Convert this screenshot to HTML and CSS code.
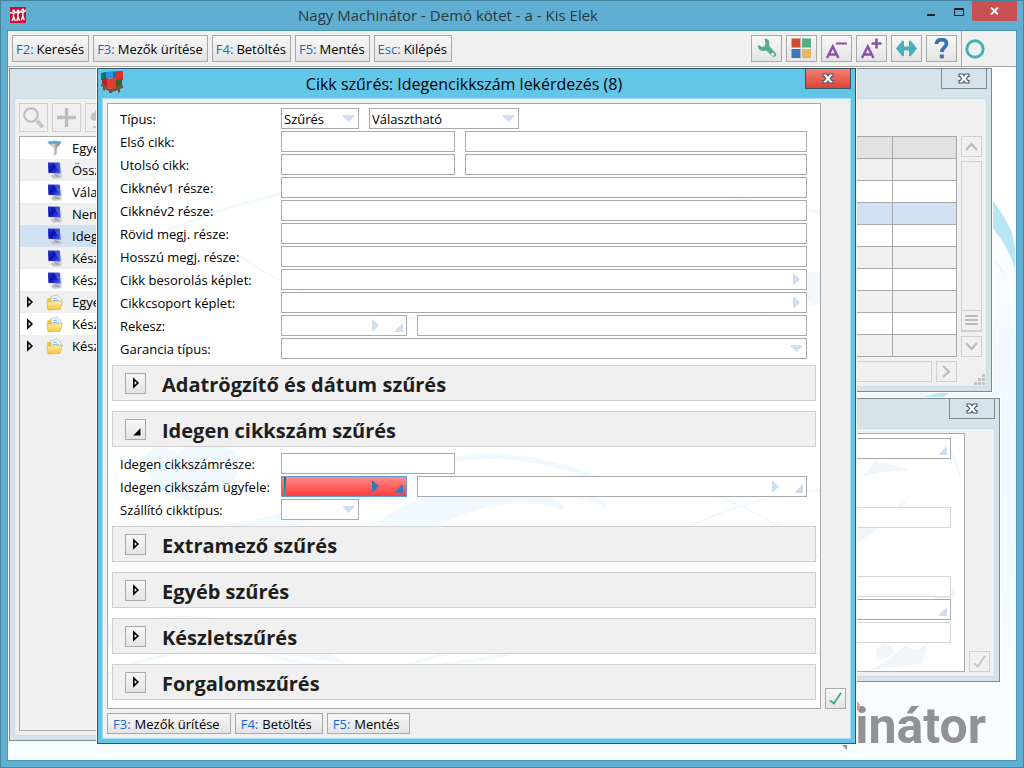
FILE: index.html
```html
<!DOCTYPE html>
<html lang="hu">
<head>
<meta charset="utf-8">
<title>Nagy Machinátor - Demó kötet - a - Kis Elek</title>
<link rel="stylesheet" href="styles.css">
</head>
<body>
<svg class="defs" width="0" height="0" aria-hidden="true">
  <defs>
    <linearGradient id="screen" x1="0" y1="0" x2="1" y2="1"><stop offset="0" stop-color="#2a3ad0"/><stop offset="0.45" stop-color="#0a10b0"/><stop offset="1" stop-color="#5070e8"/></linearGradient>
    <linearGradient id="folder" x1="0" y1="0" x2="0" y2="1"><stop offset="0" stop-color="#fff3a8"/><stop offset="1" stop-color="#f3c440"/></linearGradient>
    <linearGradient id="metal" x1="0" y1="0" x2="1" y2="0"><stop offset="0" stop-color="#6f7578"/><stop offset="0.4" stop-color="#d5d8d8"/><stop offset="1" stop-color="#5f6568"/></linearGradient>
    <symbol id="cross" viewBox="0 0 12 11"><path d="M1 1h3.800L6 3l1.200-2H11v2.500H9.800L8.300 5.500l1.500 2H11V10H7.200L6 8 4.800 10H1V7.500h1.200l1.500-2-1.500-2H1z" fill="#fff" stroke="#4a5060" stroke-width="1.100"/></symbol>
    <symbol id="monitor" viewBox="0 0 16 16"><path d="M4 13l5-2 6 2-1 2.400-7 .4z" fill="#c4c6ce"/><path d="M8 11l4 .5v2.500l-4-.5z" fill="#9a9ca8"/><path d="M2.500.8l11.300.2 1.400 11.500L2 10.800z" fill="#d7d9e2"/><path d="M1.800.5l11 .3 1 10.200-11.500-1z" fill="url(#screen)"/><path d="M8 .7l4.800.1 1 8C11 7 8.800 4.500 8 .7z" fill="#6c88f0" opacity=".5"/></symbol>
    <symbol id="docs" viewBox="0 0 17 16"><path d="M1 4l5-1.500 2 1.500 6 .5v10L2 15z" fill="#f2c44c"/><path d="M5 2l6-1.500L15 4v8H5.500z" fill="#f4f8ff" stroke="#a9bfe6" stroke-width=".8"/><path d="M7 4l4-.5M7 6l6-.3M7 8h6" stroke="#8fb0e4"/><path d="M.8 7.500l12-.2 3.700-.8-2.400 8.300L2 15.500z" fill="url(#folder)" stroke="#dcaa38" stroke-width=".6"/></symbol>
    <symbol id="closed" viewBox="0 0 8 12"><path d="M1.800 2.200v7.600L5.900 6z" fill="none" stroke="#000" stroke-width="1.600"/></symbol>
    <symbol id="tick" viewBox="0 0 15 15"><path d="M2 9.500L6 12.500 13 1.800" fill="none" stroke="currentColor" stroke-width="1.900"/></symbol>
  </defs>
</svg>
<div class="app">
  <header class="titlebar">
    <svg class="app-icon" viewBox="0 0 16 16" aria-hidden="true"><path fill="#cc0a2f" d="M0 0h16v16H0z"/><g fill="#fff"><circle cx="3.600" cy="3.800" r="1.400"/><circle cx="8" cy="3.800" r="1.400"/><circle cx="12.800" cy="3" r="1.400"/></g><path d="M0 5.500l3.600 1 2.400-1.500L8 6.500l2.500-2 2.300 1.300L16 3M3.600 6v4l-1.500 4M3.600 10l1.700 4M8 6v4l-1.200 4M8 10l1.500 3.500M12.800 5v4l-1.500 4.500M12.800 9l1.500 4" fill="none" stroke="#fff" stroke-width="1.500"/></svg>
    <h1 class="titlebar-text">Nagy Machinátor - Demó kötet - a - Kis Elek</h1>
    <div class="controls">
      <button class="control" aria-label="Kis méret"><svg width="9" height="18" viewBox="0 0 9 18"><path fill="#222" d="M0 12h8v2H0z"/></svg></button>
      <button class="control" aria-label="Teljes méret"><svg width="10" height="18" viewBox="0 0 10 18"><path d="M.5 6.500h9v7h-9zM0 7.500h10" fill="none" stroke="#222"/></svg></button>
      <button class="control control-close" aria-label="Bezárás"><svg width="10" height="8" viewBox="0 0 10 8"><path d="M1 .5l7 7M8 .5l-7 7" fill="none" stroke="#fff" stroke-width="1.800"/></svg></button>
    </div>
  </header>

  <div class="frame">
    <nav class="toolbar">
      <button class="btn"><span class="key">F2:</span> Keresés</button>
      <button class="btn"><span class="key">F3:</span> Mezők ürítése</button>
      <button class="btn"><span class="key">F4:</span> Betöltés</button>
      <button class="btn"><span class="key">F5:</span> Mentés</button>
      <button class="btn"><span class="key">Esc:</span> Kilépés</button>
      <div class="tools">
        <button class="btn btn-icon" aria-label="Beállítások"><svg viewBox="0 0 21 21"><path d="M8.500.8c3-.5 5.200 1.500 4.800 4.500l-.2 2.500 6.500 7.200c1.700 2.200-.8 5-3.200 3.400L10 12.200c-2.400 1.800-6 .6-7.300-1.500L1.500 7.800l1.700-.6L5.500 9l3-.5 1-3z" fill="#55ac85"/><circle cx="16.800" cy="16.200" r="1.500" fill="#eee"/></svg></button>
        <button class="btn btn-icon" aria-label="Ablakok"><svg viewBox="0 0 21 21"><path fill="#cf4a2e" d="M.5.500h9v9h-9z"/><path fill="#55ac85" d="M11 .5h9v9h-9z"/><path fill="#3d78b8" d="M.5 11h9v9h-9z"/><path fill="#e9b664" d="M11 11h9v9h-9z"/></svg></button>
        <button class="btn btn-icon" aria-label="Kisebb betűk"><svg viewBox="0 0 21 21"><path d="M1 20L6.800 8.500 12.500 20M3.500 16.500h7" fill="none" stroke="#8c50aa" stroke-width="2.400"/><path d="M10 5.500h11" stroke="#8c50aa" stroke-width="2"/></svg></button>
        <button class="btn btn-icon" aria-label="Nagyobb betűk"><svg viewBox="0 0 21 21"><path d="M1 20L6.800 8.500 12.500 20M3.500 16.500h7" fill="none" stroke="#8c50aa" stroke-width="2.400"/><path d="M10.500 5.500h10M15.500.5v10" stroke="#8c50aa" stroke-width="2.600"/></svg></button>
        <button class="btn btn-icon" aria-label="Szélesség"><svg viewBox="0 0 21 21"><path d="M0 10.500L7 2v6.500h7V2l7 8.500-7 8.500v-6.500H7V19z" fill="#45b0b8"/><path d="M4.500 6v9M16.500 6v9" stroke="#45b0b8" stroke-width="3"/><path d="M7 3v15M14 3v15" stroke="#45b0b8" stroke-width="2"/></svg></button>
        <button class="btn btn-icon" aria-label="Súgó"><svg viewBox="0 0 21 21"><path d="M5.500 6C5.700 2.800 8 1.700 10.500 1.700c2.800 0 5 1.300 5 4 0 4-4.700 3.600-4.700 8.300" fill="none" stroke="#3a72b4" stroke-width="3.800"/><path fill="#3a72b4" d="M8.800 16.500h4v3.800h-4z"/></svg></button>
      </div>
      <div class="status"><svg width="20" height="20" viewBox="0 0 20 20" role="img" aria-label="Kész"><circle cx="10" cy="10" r="8.200" fill="none" stroke="#45b0b0" stroke-width="2.900"/></svg></div>
    </nav>

    <main class="desktop">
      <svg class="backdrop" viewBox="0 0 1008 693" preserveAspectRatio="xMaxYMax slice" aria-hidden="true">
        <path d="M850 110c70-60 110-50 158-44v12c-60-5-110 10-158 60zM975 100q16-9 33-9M970 160q20-12 38-10" fill="#fff" opacity=".7"/>
        <path d="M984 132c13 20 26 33 23 70-6-20-14-30-23-42zM985 191q8 10 13 22-5-14-13-22M906 335c8-7 23-8 39-12l-16 12z" fill="#b9e6f5"/>
        <path d="M832 676l7 7v-6z" fill="#909092"/>
      </svg>
      <div class="brand">Machinátor</div>

      <section class="window window-tree">
        <div class="window-title"></div>
        <div class="client tree-client">
          <div class="tree-tools">
            <button class="btn-faded" aria-label="Keresés" disabled><svg viewBox="0 0 21 21"><circle cx="8" cy="8" r="6.800" fill="none" stroke="#bdbdbd" stroke-width="2"/><path d="M14 14l6 6" stroke="#c6c6c6" stroke-width="4"/></svg></button>
            <button class="btn-faded" aria-label="Új" disabled><svg viewBox="0 0 21 21"><path d="M10.500 1v19M1 10.500h19" stroke="#bdbdbd" stroke-width="3.400"/></svg></button>
            <button class="btn-faded" aria-label="Fa" disabled><svg viewBox="0 0 21 21"><path d="M11 1c-4 0-5 3-5 4-4 1-5 4-4 7 1 2 4 2 6 1v6H4v2h13V5z" fill="#c4c4c4"/></svg></button>
          </div>
          <ul class="tree">
            <li><i></i><svg class="tree-icon" viewBox="0 0 16 16"><path d="M1.500 2h13l-4.500 6v5.500L7.500 15V8z" fill="url(#metal)"/><ellipse cx="8" cy="2.300" rx="6.500" ry="1.500" fill="#5ba7d6"/></svg>Egye</li>
            <li><i></i><svg class="tree-icon"><use href="#monitor"/></svg>Össz</li>
            <li><i></i><svg class="tree-icon"><use href="#monitor"/></svg>Vála</li>
            <li><i></i><svg class="tree-icon"><use href="#monitor"/></svg>Nem</li>
            <li class="selected"><i></i><svg class="tree-icon"><use href="#monitor"/></svg>Ideg</li>
            <li><i></i><svg class="tree-icon"><use href="#monitor"/></svg>Kész</li>
            <li><i></i><svg class="tree-icon"><use href="#monitor"/></svg>Kész</li>
            <li><i><svg width="8" height="12"><use href="#closed"/></svg></i><svg class="tree-icon"><use href="#docs"/></svg>Egye</li>
            <li><i><svg width="8" height="12"><use href="#closed"/></svg></i><svg class="tree-icon"><use href="#docs"/></svg>Kész</li>
            <li><i><svg width="8" height="12"><use href="#closed"/></svg></i><svg class="tree-icon"><use href="#docs"/></svg>Kész</li>
          </ul>
        </div>
      </section>

      <section class="window window-table">
        <div class="window-title"><button class="window-close" aria-label="Bezárás"><svg width="12" height="11"><use href="#cross"/></svg></button></div>
        <div class="client table-client">
          <table class="grid">
            <thead><tr><th></th><th class="narrow"></th></tr></thead>
            <tbody>
              <tr><td></td><td></td></tr><tr><td></td><td></td></tr><tr class="selected"><td></td><td></td></tr>
              <tr><td></td><td></td></tr><tr><td></td><td></td></tr><tr><td></td><td></td></tr>
              <tr><td></td><td></td></tr><tr><td></td><td></td></tr><tr><td></td><td></td></tr>
            </tbody>
          </table>
          <div class="vscroll">
            <button class="scroll-btn" aria-label="Fel" disabled><svg width="13" height="9" viewBox="0 0 13 9"><path d="M1 8l5.500-6L12 8" fill="none" stroke="#b9b9b9" stroke-width="2"/></svg></button>
            <div class="vtrack"><div class="thumb"><svg width="13" height="11" viewBox="0 0 13 11"><path d="M0 1h13M0 5h13M0 9h13" stroke="#bbb" stroke-width="2"/></svg></div></div>
            <button class="scroll-btn" aria-label="Le" disabled><svg width="13" height="9" viewBox="0 0 13 9"><path d="M1 1l5.500 6L12 1" fill="none" stroke="#b9b9b9" stroke-width="2"/></svg></button>
          </div>
          <div class="hscroll">
            <div class="htrack"></div>
            <button class="scroll-btn" aria-label="Jobbra" disabled><svg width="9" height="13" viewBox="0 0 9 13"><path d="M1 1l6 5.500L1 12" fill="none" stroke="#b9b9b9" stroke-width="2"/></svg></button>
          </div>
          <svg class="grip" width="12" height="12" viewBox="0 0 12 12"><path d="M8 0h3v3H8zM4 4h3v3H4zM8 4h3v3H8zM0 8h3v3H0zM4 8h3v3H4zM8 8h3v3H8z" fill="#c3c3c3"/></svg>
        </div>
      </section>

      <section class="window window-detail">
        <div class="window-title"><button class="window-close" aria-label="Bezárás"><svg width="12" height="11"><use href="#cross"/></svg></button></div>
        <div class="client detail-client">
          <div class="panel detail-panel">
            <svg class="panel-art" viewBox="0 0 366 237" preserveAspectRatio="xMaxYMin slice" aria-hidden="true"><path d="M256 48q12-6 20-21 20 4 36 9l-26 2q-16 1-30 10zM335 0q26 14 28 51-8-38-28-51zM256 92q36-10 57-31-20 28-57 50zM278 217q8-14 18 0-6 12-18 6zM306 212l14 4 10-8q-4 12-6 22l-52 6q20-10 34-24zM340 156q20-6 17 6-6 14-27 14z" fill="#f1f6fa"/></svg>
            <span class="box"><input aria-label="Érték 1"><b class="mark corner"></b></span>
            <span class="box muted gap"><input aria-label="Érték 2" readonly></span>
            <span class="box muted gap"><input aria-label="Érték 3" readonly></span>
            <span class="box"><input aria-label="Érték 4"><b class="mark corner"></b></span>
            <span class="box muted"><input aria-label="Érték 5" readonly></span>
          </div>
          <button class="btn-faded btn-ok" aria-label="Rendben" disabled><svg width="15" height="15"><use href="#tick"/></svg></button>
        </div>
      </section>

      <section class="window dialog" role="dialog" aria-labelledby="dialog-title">
        <div class="window-title">
          <svg class="dialog-icon" viewBox="0 0 22 22" aria-hidden="true"><path d="M0 13l9 5 13-4v3l-3 1v3l-2 1v-3l-6 2v2H8v-3l-4-2v2l-2-1v-3l-2-1z" fill="#7a5034"/><path d="M5 1l9-1v7H5z" fill="#2398dc"/><path d="M0 2l5-1v8H0z" fill="#0b7566"/><path d="M12 1l5-1v9h-5z" fill="#1173b5"/><path d="M15 0h7v9l-7 1z" fill="#d83128"/><path d="M1 8l6-1v10l-6-4z" fill="#b81f2f"/><path d="M6 8l9-1v10l-9 1z" fill="#e23c32"/><path d="M15 9l6-1v6l-6 3z" fill="#36612b"/></svg>
          <h2 id="dialog-title">Cikk szűrés: Idegencikkszám lekérdezés (8)</h2>
          <button class="window-close" aria-label="Bezárás"><svg width="12" height="11"><use href="#cross"/></svg></button>
        </div>
        <div class="client dialog-client">
          <form class="panel form-panel">
            <svg class="panel-art" viewBox="0 0 712 604" preserveAspectRatio="xMidYMid slice" aria-hidden="true">
              <g fill="none" stroke="#f0f9fd"><path d="M60 126q70-28 130-40 240-30 522 22" stroke-width="3"/><path d="M120 144q70 50 140 64 250 40 452-10" stroke-width="2"/><path d="M240 400q110-80 250-25" stroke-width="5"/><path d="M610 392q60 24 100 60M712 386q-60 4-130 36" stroke-width="2"/><path d="M0 570q90-40 180-14 90 20 220-6M300 560q200-60 412-10" stroke-width="3"/></g>
              <path d="M40 368c-10-20 10-34 30-18 10-14 40-14 60 0 10 14-10 40-40 46-30 0-44-10-50-28zM20 420c90 10 190-8 230-54 20-8 30-6 40-4-50 60-160 84-270 58M260 424q60-44 130-50l150 6q-30 14-64 8 20 6 24 16-36-14-60-12 14 4 16 14-60-20-130 18zM0 520c100-20 180 0 240 40-90-14-160-20-240-20zM690 168h22v30h-22z" fill="#f0f9fd"/>
            </svg>
            <div class="rows">
              <div class="row"><label for="type">Típus:</label><span class="box w-code"><select id="type"><option>Szűrés</option></select><b class="mark down"></b></span><span class="box w-mode"><select aria-label="Választhatóság"><option>Választható</option></select><b class="mark down"></b></span></div>
              <div class="row"><label for="first">Első cikk:</label><span class="box w-item"><input id="first"></span><span class="box"><input aria-label="Első cikk neve"></span></div>
              <div class="row"><label for="last">Utolsó cikk:</label><span class="box w-item"><input id="last"></span><span class="box"><input aria-label="Utolsó cikk neve"></span></div>
              <div class="row"><label for="name1">Cikknév1 része:</label><span class="box"><input id="name1"></span></div>
              <div class="row"><label for="name2">Cikknév2 része:</label><span class="box"><input id="name2"></span></div>
              <div class="row"><label for="short">Rövid megj. része:</label><span class="box"><input id="short"></span></div>
              <div class="row"><label for="long">Hosszú megj. része:</label><span class="box"><input id="long"></span></div>
              <div class="row"><label for="class">Cikk besorolás képlet:</label><span class="box"><input id="class"><b class="mark right"></b></span></div>
              <div class="row"><label for="group">Cikkcsoport képlet:</label><span class="box"><input id="group"><b class="mark right"></b></span></div>
              <div class="row"><label for="bin">Rekesz:</label><span class="box w-pick"><input id="bin"><b class="mark right paired"></b><b class="mark corner"></b></span><span class="box"><input aria-label="Rekesz neve"></span></div>
              <div class="row"><label for="warranty">Garancia típus:</label><span class="box"><select id="warranty"><option></option></select><b class="mark down"></b></span></div>
            </div>
            <div class="fold"><button type="button" class="btn fold-btn" aria-label="Kinyitás"><svg width="8" height="12"><use href="#closed"/></svg></button><h3>Adatrögzítő és dátum szűrés</h3></div>
            <div class="fold"><button type="button" class="btn fold-btn" aria-label="Becsukás"><svg width="21" height="21" viewBox="0 0 21 21"><path d="M16 9v8H8z"/></svg></button><h3>Idegen cikkszám szűrés</h3></div>
            <div class="rows">
              <div class="row"><label for="ext">Idegen cikkszámrésze:</label><span class="box w-item"><input id="ext"></span></div>
              <div class="row"><label for="client">Idegen cikkszám ügyfele:</label><span class="box w-pick alert"><input id="client"><b class="caret"></b><b class="mark right paired"></b><b class="mark corner"></b></span><span class="box"><input aria-label="Ügyfél neve"><b class="mark right paired"></b><b class="mark corner"></b></span></div>
              <div class="row"><label for="supplier">Szállító cikktípus:</label><span class="box w-code"><select id="supplier"><option></option></select><b class="mark down"></b></span></div>
            </div>
            <div class="fold"><button type="button" class="btn fold-btn" aria-label="Kinyitás"><svg width="8" height="12"><use href="#closed"/></svg></button><h3>Extramező szűrés</h3></div>
            <div class="fold"><button type="button" class="btn fold-btn" aria-label="Kinyitás"><svg width="8" height="12"><use href="#closed"/></svg></button><h3>Egyéb szűrés</h3></div>
            <div class="fold"><button type="button" class="btn fold-btn" aria-label="Kinyitás"><svg width="8" height="12"><use href="#closed"/></svg></button><h3>Készletszűrés</h3></div>
            <div class="fold"><button type="button" class="btn fold-btn" aria-label="Kinyitás"><svg width="8" height="12"><use href="#closed"/></svg></button><h3>Forgalomszűrés</h3></div>
          </form>
          <button class="btn btn-ok" aria-label="Rendben"><svg width="15" height="15"><use href="#tick"/></svg></button>
          <footer class="dialog-footer">
            <button class="btn"><span class="key">F3:</span> Mezők ürítése</button>
            <button class="btn"><span class="key">F4:</span> Betöltés</button>
            <button class="btn"><span class="key">F5:</span> Mentés</button>
          </footer>
        </div>
      </section>
    </main>
  </div>
</div>
</body>
</html>
```
FILE: styles.css
```css
*, *::before, *::after { box-sizing: border-box; }
body {
  margin: 0;
  font: 13px/19px "Open Sans", "Noto Sans", sans-serif;
  color: #000;
}
button, input, select { font: inherit; color: inherit; margin: 0; padding: 0; }
h1, h2, h3 { margin: 0; font-weight: 400; }
svg { display: block; }
.defs { position: absolute; }

.app {
  display: flex;
  flex-direction: column;
  height: 100vh;
  padding: 0 6px 6px;
  border: 1px solid #43849f;
  background: #60aed2;
}
.titlebar { display: flex; height: 29px; }
.app-icon { width: 16px; height: 16px; margin: 6px 0 0 3px; }
.titlebar-text {
  flex: 1;
  padding-right: 48px;
  text-align: center;
  font-size: 15px;
  line-height: 29px;
  color: #2b3940;
}
.controls { display: flex; align-items: flex-start; }
.control {
  display: flex;
  justify-content: center;
  align-items: center;
  width: 27px;
  height: 20px;
  border: 0;
  background: none;
}
.control-close { width: 45px; background: #c75050; }

.frame {
  flex: 1;
  display: flex;
  flex-direction: column;
  min-height: 0;
  border: 1px solid #4c97b8;
}
.toolbar {
  display: flex;
  gap: 4px;
  padding: 4px 0 4px 4px;
  border-bottom: 1px solid #a9a9a9;
  background: #f0f0f0;
}
.btn {
  display: flex;
  align-items: center;
  justify-content: center;
  gap: 3px;
  height: 27px;
  padding: 2px 4px 0 3px;
  border: 1px solid #a9a9a9;
  background: linear-gradient(#f7f7f7, #e4e4e4);
  white-space: nowrap;
}
.key { color: #1068d0; }
.tools { display: flex; gap: 4px; margin-left: auto; }
.btn-icon { width: 31px; padding: 0; }
.btn-icon svg { width: 21px; height: 21px; }
.status {
  display: flex;
  align-items: center;
  width: 55px;
  margin: -4px 0;
  padding-left: 3px;
  border-left: 1px solid #a9a9a9;
}

.desktop {
  flex: 1;
  position: relative;
  overflow: hidden;
  background: linear-gradient(#fff, #fff 20%, #f0f9ff 45%, #f8fdff);
}
.backdrop { position: absolute; inset: 0; width: 100%; height: 100%; }
.brand {
  position: absolute;
  right: 30px;
  bottom: 4px;
  font: 700 50px/60px Roboto, "Open Sans", sans-serif;
  color: #929294;
}
.brand::after {
  content: "";
  position: absolute;
  right: 126px;
  top: 5px;
  width: 12px;
  height: 10px;
  border-radius: 5px;
  background: #ee9aa5;
}

.window {
  position: absolute;
  display: flex;
  flex-direction: column;
  padding: 0 4px 4px;
  border: 1px solid #7c8a93;
  background: #d6e3ea;
  box-shadow: 0 0 0 1px #fff;
}
.window-title { display: flex; justify-content: flex-end; height: 29px; }
.window-close {
  display: flex;
  align-items: center;
  justify-content: center;
  width: 46px;
  height: 21px;
  margin-top: -1px;
  border: 1px solid #7c8a93;
  background: #d6e3ea;
}
.client { flex: 1; border: 1px solid #c9dde7; background: #f0f0f0; }
.panel { position: relative; border: 1px solid #a9a9a9; background: #fff; }
.panel-art { position: absolute; inset: 0; width: 100%; height: 100%; }
.btn-faded, .scroll-btn {
  display: flex;
  align-items: center;
  justify-content: center;
  border: 1px solid #d0d0d0;
  background: #f0f0f0;
}
.scroll-btn { width: 21px; height: 21px; }

.window-tree { left: 1px; top: 1px; bottom: 19px; width: 48%; }
.tree-client { display: flex; flex-direction: column; gap: 4px; padding: 4px; }
.tree-tools { display: flex; gap: 4px; }
.btn-faded { width: 29px; height: 29px; }
.btn-faded svg { width: 21px; height: 21px; }
.tree {
  flex: 1;
  margin: 0;
  padding: 0;
  list-style: none;
  border: 1px solid #a9a9a9;
  background: #f0f0f0;
}
.tree li { display: flex; align-items: center; height: 22px; }
.tree li:nth-child(odd) { background: #fff; }
.tree li.selected { background: #d0e1f1; }
.tree i { width: 26px; padding-left: 6px; }
.tree-icon { width: 17px; height: 17px; margin-right: 9px; }

.window-table { right: 24px; top: 1px; width: 40%; }
.table-client {
  position: relative;
  display: grid;
  grid-template-columns: 1fr 21px;
  gap: 4px;
  padding: 37px 4px 4px;
}
.grid { width: 100%; border-collapse: collapse; table-layout: fixed; }
.grid th, .grid td { height: 22px; padding: 0; border: 1px solid #a9a9a9; background: #fff; }
.grid th { background: #e1e1e1; }
.grid .narrow { width: 64px; }
.grid tbody tr:nth-child(odd) td { background: #f0f0f0; }
.grid tbody tr:nth-child(4) td { background: #fff; }
.grid tbody tr.selected td { background: #d0e1f1; }
.vscroll { display: flex; flex-direction: column; gap: 4px; }
.vtrack { flex: 1; display: flex; align-items: flex-end; border: 1px solid #d0d0d0; border-bottom-width: 2px; }
.thumb {
  flex: 1;
  display: flex;
  align-items: center;
  justify-content: center;
  height: 20px;
  border-top: 1px solid #d0d0d0;
}
.hscroll { display: flex; gap: 4px; }
.htrack { flex: 1; border: 1px solid #d0d0d0; }
.grip { position: absolute; right: 0; bottom: 0; }

.window-detail { right: 16px; top: 331px; width: 40%; }
.detail-client { display: flex; align-items: flex-end; gap: 4px; padding: 4px; }
.detail-panel {
  flex: 1;
  display: flex;
  flex-direction: column;
  gap: 2px;
  padding: 4px 13px 28px 4px;
}
.detail-panel .box { flex: none; }
.detail-panel .gap { margin-top: 46px; }
.btn-ok { width: 21px; height: 21px; padding: 0; color: #48ac80; }
.btn-faded.btn-ok { color: #c4c4c4; }
.btn-ok svg { width: 15px; height: 15px; }

.dialog {
  left: 89px;
  right: 160px;
  top: 1px;
  border-color: #30586b;
  background: #62c6e9;
}
.dialog .window-close { border-color: #30586b; background: linear-gradient(#f57d74, #dc4537); }
.dialog-icon { width: 22px; height: 22px; margin: 2px 0 0 -1px; }
.dialog h2 {
  flex: 1;
  text-align: center;
  font-size: 16px;
  line-height: 31px;
}
.dialog-client {
  display: grid;
  grid-template-columns: 1fr 21px;
  align-items: end;
  gap: 4px;
  padding: 4px;
  border-color: #a8dcf0;
}
.dialog-footer { display: flex; gap: 4px; }
.dialog-footer .btn { gap: 4px; height: 21px; padding: 1px 10px 0 5px; }
.form-panel {
  display: flex;
  flex-direction: column;
  padding: 4px 4px 8px;
}
.rows {
  position: relative;
  display: flex;
  flex-direction: column;
  gap: 2px;
  padding: 0 9px 0 8px;
  margin-bottom: 6px;
}
.row { display: flex; gap: 10px; height: 21px; }
.row label { width: 151px; line-height: 23px; white-space: nowrap; }
.box {
  position: relative;
  flex: 1;
  display: flex;
  height: 21px;
  border: 1px solid #a9a9a9;
  background: #fff;
}
.box input, .box select {
  flex: 1;
  min-width: 0;
  width: 100%;
  padding: 1px 2px 0;
  border: 0;
  outline: 0;
  background: none;
  appearance: none;
}
.muted { border-color: #d6d6d6; }
.w-code { flex: none; width: 78px; }
.w-mode { flex: none; width: 150px; }
.w-item { flex: none; width: 174px; }
.w-pick { flex: none; width: 126px; }
.mark { position: absolute; background: #d0dff0; pointer-events: none; }
.down { right: 4px; top: 6px; width: 11px; height: 7px; clip-path: polygon(0 0, 100% 0, 100% 20%, 50% 100%, 0 20%); }
.right { right: 6px; top: 4px; width: 7px; height: 11px; clip-path: polygon(0 0, 20% 0, 100% 50%, 20% 100%, 0 100%); }
.paired { right: 27px; }
.corner { right: 3px; bottom: 3px; width: 8px; height: 8px; clip-path: polygon(100% 0, 100% 100%, 0 100%, 0 85%, 85% 0); }
.alert { border-color: #5b9be0; background: linear-gradient(#ff8a8a, #ff3c3c); }
.alert .mark { background: #3a78b8; }
.caret { position: absolute; left: 2px; top: 0; bottom: 0; width: 2px; background: linear-gradient(#007a78, #00c0b8); }

.fold {
  position: relative;
  display: flex;
  align-items: center;
  gap: 16px;
  height: 36px;
  padding-left: 12px;
  border: 1px solid #d0d0d0;
  background: #f0f0f0;
}
.fold + .fold { margin-top: 10px; }
.fold + .rows { margin-top: 6px; }
.fold-btn { width: 21px; height: 21px; padding: 0; }
.fold h3 { padding-top: 3px; font-size: 20px; line-height: 31px; font-weight: 700; color: #1e1e1e; white-space: nowrap; }
```
